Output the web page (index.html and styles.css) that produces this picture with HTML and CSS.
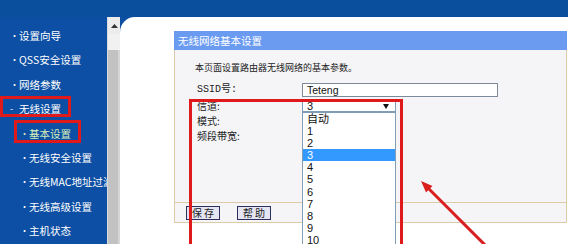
FILE: index.html
```html
<!DOCTYPE html>
<html lang="zh">
<head>
<meta charset="utf-8">
<title>无线网络基本设置</title>
<link rel="stylesheet" href="styles.css">
</head>
<body>
<div class="page">
  <div class="topbar"></div>
  <div class="row">
    <nav class="side">
      <div class="item"><span class="dot">•</span>设置向导</div>
      <div class="item"><span class="dot">•</span>QSS安全设置</div>
      <div class="item"><span class="dot">•</span>网络参数</div>
      <div class="item"><span class="dot">-</span>无线设置</div>
      <div class="item sub current"><span class="dot">•</span>基本设置</div>
      <div class="item sub"><span class="dot">•</span>无线安全设置</div>
      <div class="item sub"><span class="dot">•</span>无线MAC地址过滤</div>
      <div class="item sub"><span class="dot">•</span>无线高级设置</div>
      <div class="item sub"><span class="dot">•</span>主机状态</div>
    </nav>
    <div class="scroll">
      <div class="scroll-btn"><svg width="7" height="4" viewBox="0 0 7 4"><path d="M0 4 L3.5 0 L7 4 Z" fill="#333"/></svg></div>
      <div class="scroll-gap"></div>
      <div class="scroll-thumb"></div>
    </div>
    <main class="main">
      <section class="panel">
        <div class="panel-title">无线网络基本设置</div>
        <div class="panel-body">
          <p class="desc">本页面设置路由器无线网络的基本参数。</p>
          <div class="form-row r1"><span class="label">SSID号:</span><div class="input">Teteng</div></div>
          <div class="form-row r2"><span class="label">信道:</span>
            <div class="select"><span>3</span><svg class="caret" width="6" height="5" viewBox="0 0 6 5"><path d="M0 0 L6 0 L3 5 Z" fill="#111"/></svg>
              <ul class="list">
                <li>自动</li><li>1</li><li>2</li><li class="sel">3</li><li>4</li><li>5</li><li>6</li><li>7</li><li>8</li><li>9</li><li>10</li>
              </ul>
            </div>
          </div>
          <div class="form-row r3"><span class="label">模式:</span></div>
          <div class="form-row r4"><span class="label">频段带宽:</span></div>
        </div>
        <div class="panel-foot">
          <button class="btn">保 存</button>
          <button class="btn">帮 助</button>
        </div>
      </section>
    </main>
  </div>
  <div class="mark mark-a"></div>
  <div class="mark mark-b"></div>
  <div class="mark mark-c"></div>
  <svg class="arrow" width="568" height="244" viewBox="0 0 568 244">
    <line x1="487" y1="247" x2="427" y2="187" stroke="#d81e1e" stroke-width="3"/>
    <polygon points="421,181 432.5,186 426,192.5" fill="#d81e1e"/>
  </svg>
</div>
</body>
</html>
```

FILE: styles.css
```css
* { box-sizing: border-box; }
html, body { margin: 0; padding: 0; }
body {
  width: 568px;
  height: 244px;
  overflow: hidden;
  background: #0c4ea2;
  font-family: "Noto Sans CJK SC", "Noto Sans", sans-serif;
}
.page {
  position: relative;
  width: 568px;
  height: 244px;
  display: flex;
  flex-direction: column;
  overflow: hidden;
}
.topbar { height: 17px; flex: none; background: #0a4e9e; }
.row { display: flex; flex: 1; min-height: 0; }

.side {
  width: 107px;
  flex: none;
  padding-top: 7px;
  background: #0d4fa4;
}
.item {
  height: 24.4px;
  line-height: 24.4px;
  font-size: 10.5px;
  color: #ffffff;
  white-space: nowrap;
  padding-left: 10px;
  display: flex;
  align-items: center;
}
.item .dot { width: 9px; font-size: 9px; display: inline-block; }
.item.sub { padding-left: 20px; }
.item.current { color: #d8efb8; }

.scroll {
  width: 13px;
  flex: none;
  display: flex;
  flex-direction: column;
  background: #ececec;
  border-left: 1px solid #dcdcdc;
}
.scroll-btn {
  height: 17px;
  display: flex;
  align-items: center;
  justify-content: center;
}
.scroll-gap { height: 16px; background: #f1f1f1; }
.scroll-thumb {
  flex: 1;
  background: #c2c2c2;
  border-right: 2px solid #d6d6d6;
}

.main {
  flex: 1;
  background: #ffffff;
  border-top-left-radius: 15px;
  padding: 14px 0 0 54px;
}

.panel {
  width: 393px;
  border: 1px solid #dccba6;
  border-top: none;
  background: #f5f5f7;
}
.panel-title {
  height: 19px;
  line-height: 19px;
  background: #6a9bf1;
  color: #ffffff;
  font-size: 10.5px;
  padding-left: 4px;
  margin: 0 -1px;
}
.panel-body {
  height: 152px;
  padding: 12px 0 0 20px;
  position: relative;
}
.desc {
  margin: 0;
  height: 12px;
  line-height: 12px;
  font-size: 9px;
  color: #222;
}
.form-row {
  display: flex;
  align-items: center;
  padding-left: 2px;
}
.label {
  width: 105px;
  flex: none;
  font-size: 10px;
  color: #222;
  font-family: "Liberation Mono", "Noto Sans CJK SC", monospace;
  line-height: 12px;
}
.r1 { margin-top: 9px; height: 14px; }
.r2 { margin-top: 3px; height: 12px; }
.r3 { margin-top: 2px; height: 14px; }
.r4 { margin-top: 1px; height: 14px; }
.r4 .label, .r3 .label, .r2 .label { font-family: "Noto Sans CJK SC", sans-serif; }

.input {
  width: 196px;
  height: 14px;
  border: 1px solid #7b8a9c;
  background: #ffffff;
  font-family: "Liberation Sans", sans-serif;
  font-size: 10.5px;
  line-height: 12px;
  padding-left: 4px;
  color: #111;
}
.select {
  position: relative;
  width: 94px;
  height: 12px;
  border: 1px solid #7f9db9;
  background: #ffffff;
  font-family: "Liberation Sans", sans-serif;
  font-size: 11px;
  line-height: 10px;
  padding-left: 4px;
  color: #111;
  display: flex;
  align-items: center;
  justify-content: space-between;
  padding-right: 6px;
}
.caret { display: block; }
.list {
  position: absolute;
  left: -1px;
  top: 11px;
  width: 94px;
  height: 140px;
  margin: 0;
  padding: 0;
  list-style: none;
  background: #ffffff;
  border: 1px solid #7f9db9;
}
.list li {
  height: 12.1px;
  line-height: 12.1px;
  padding-left: 4px;
  font-family: "Liberation Sans", "Noto Sans CJK SC", sans-serif;
  font-size: 11px;
  color: #111;
}
.list li.sel { background: #3399ff; color: #ffffff; }

.panel-foot {
  height: 20px;
  border-top: 1px solid #dccba6;
  display: flex;
  align-items: center;
  gap: 17px;
  padding-left: 11px;
}
.btn {
  width: 34px;
  height: 14px;
  padding: 0;
  margin: 0;
  border: 1px solid #2e2e5c;
  background: #e4e4f2;
  font-family: "Noto Sans CJK SC", sans-serif;
  font-size: 10px;
  line-height: 12px;
  color: #222;
}

.mark {
  position: absolute;
  border: 3px solid #e01a1a;
  pointer-events: none;
}
.mark-a { left: 0; top: 96px; width: 71px; height: 21px; }
.mark-b { left: 14px; top: 120px; width: 67px; height: 23px; }
.mark-c { left: 189px; top: 99px; width: 214px; height: 170px; }
.arrow { position: absolute; left: 0; top: 0; pointer-events: none; }
```
